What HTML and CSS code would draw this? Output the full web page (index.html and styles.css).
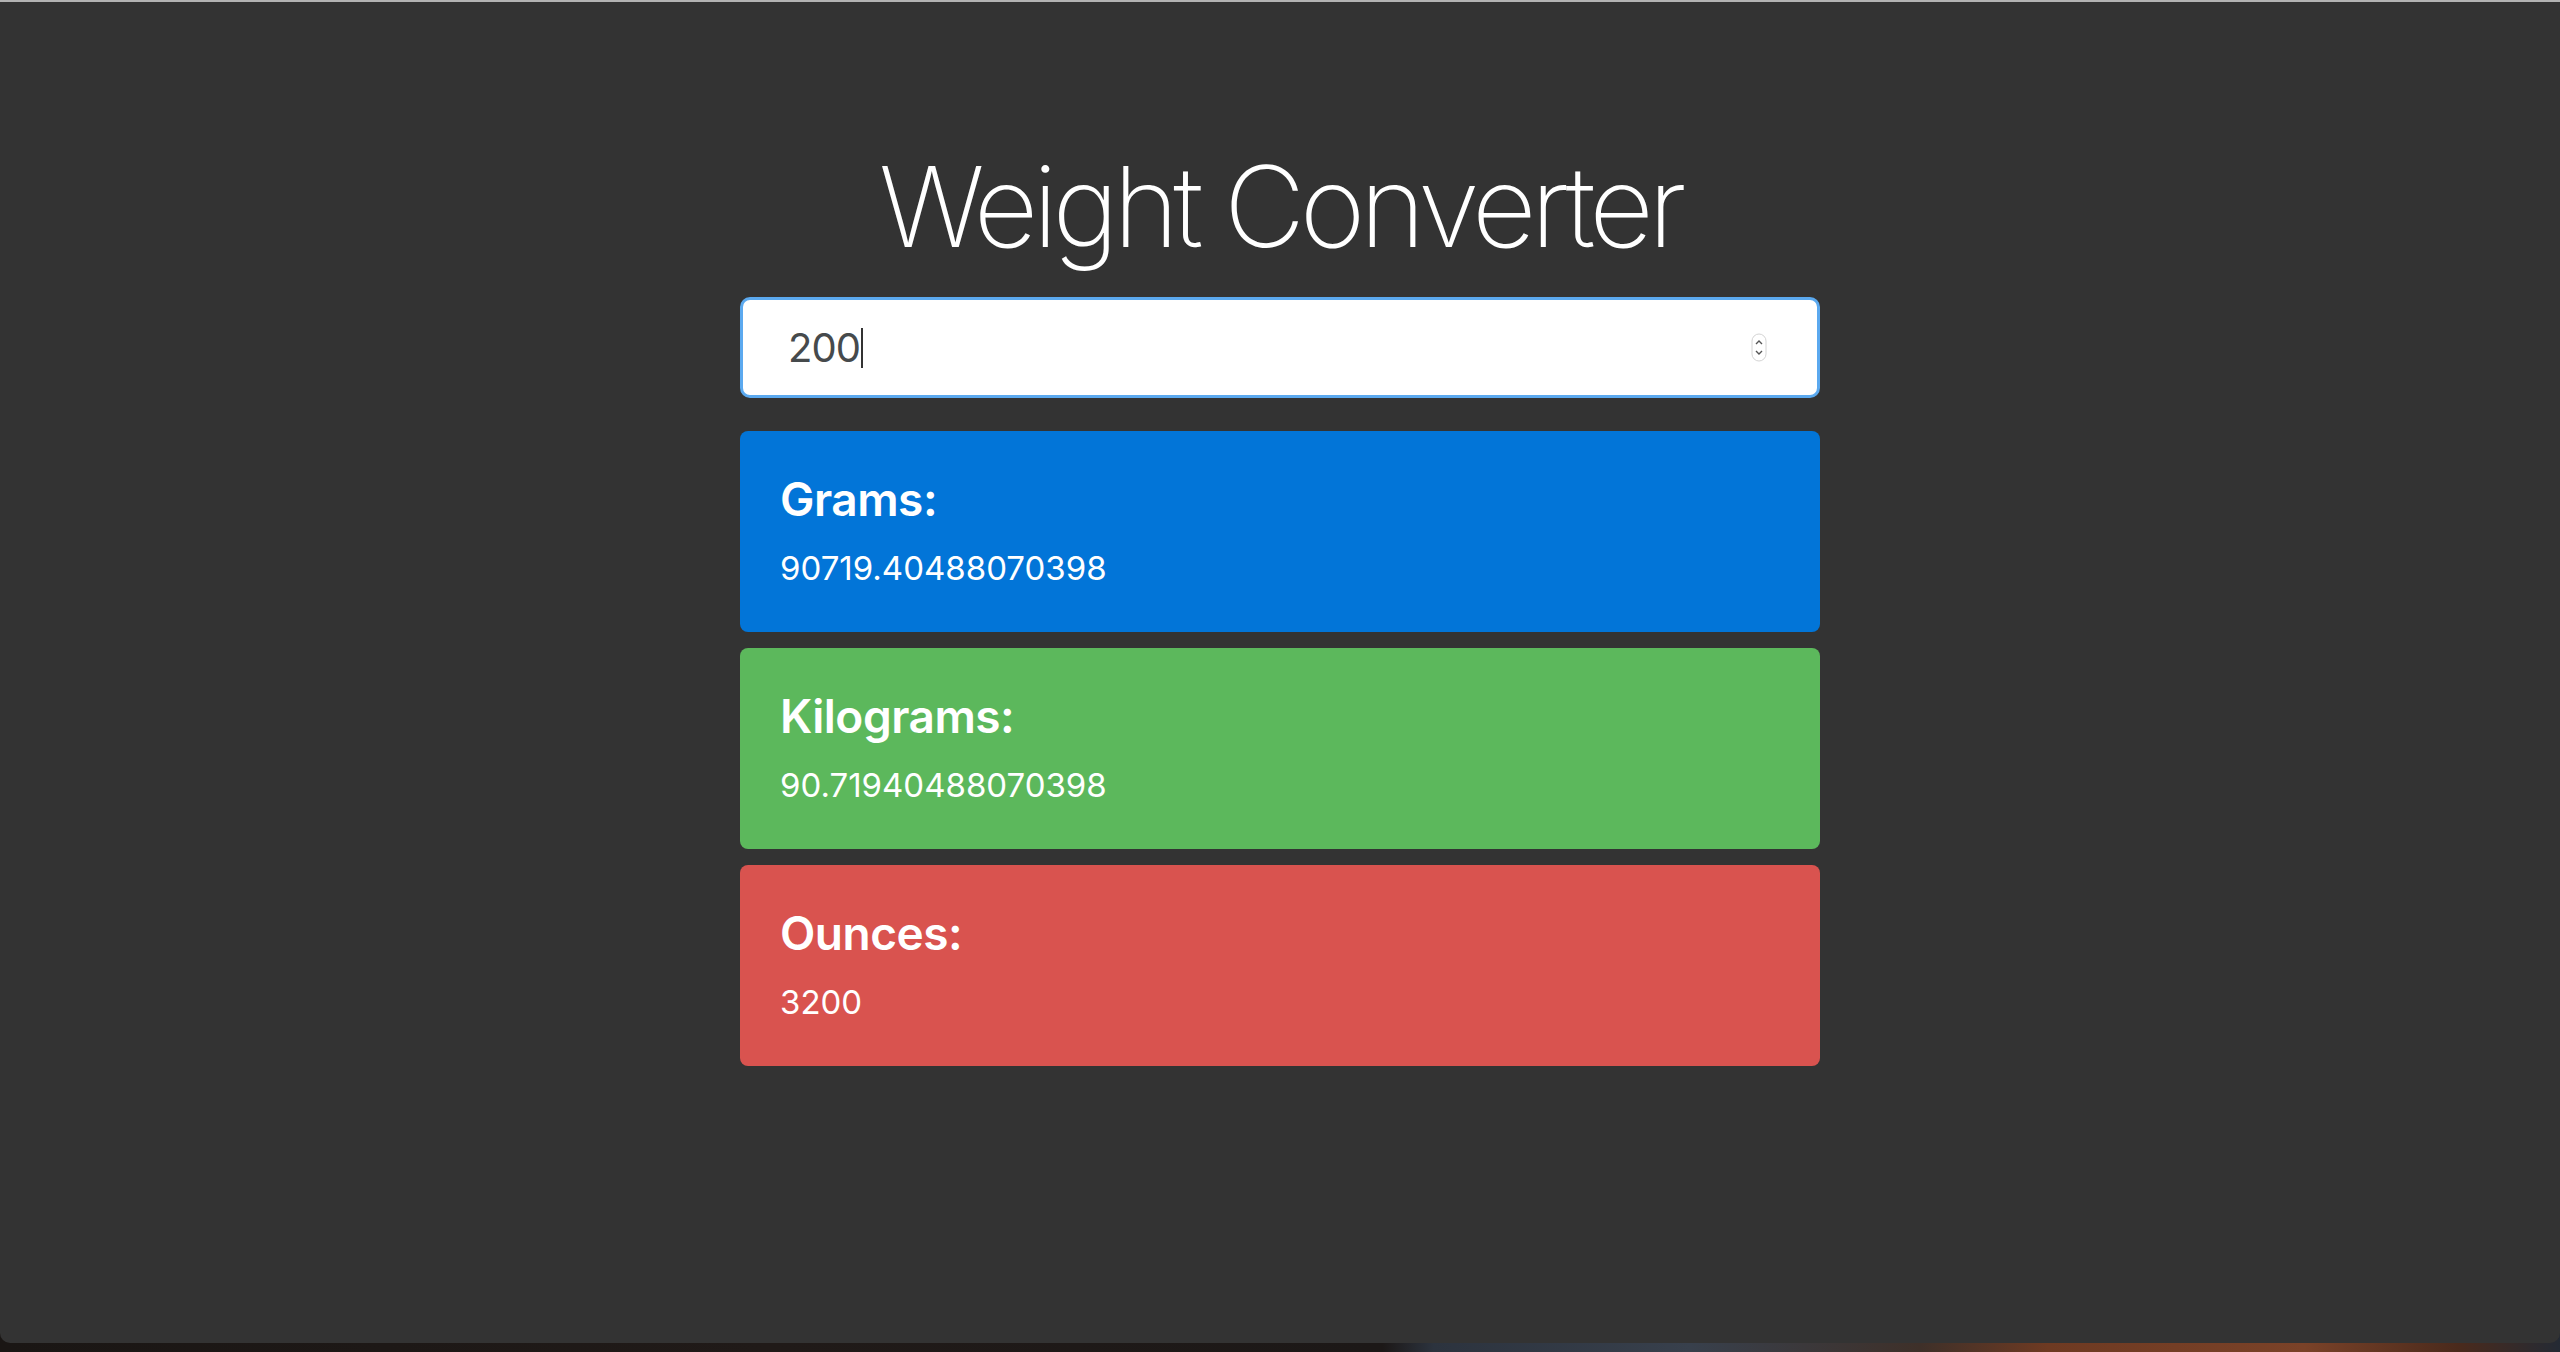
FILE: index.html
```html
<!DOCTYPE html>
<html lang="en">
<head>
<meta charset="utf-8">
<title>Weight Converter</title>
<link rel="stylesheet" href="styles.css">
</head>
<body>
<div class="window">
  <div class="container">
    <h1 class="title">Weight Converter</h1>
    <div class="field">
      <span class="field-value">200</span><span class="caret"></span>
      <svg class="spinner" width="16" height="29" viewBox="0 0 16 29" aria-hidden="true">
        <rect x="1" y="1" width="14" height="27" rx="7" ry="7" fill="#fff" stroke="#d4d4d4" stroke-width="1"/>
        <path d="M5 11 L8 8 L11 11" fill="none" stroke="#555" stroke-width="1.4"/>
        <path d="M5 18 L8 21 L11 18" fill="none" stroke="#555" stroke-width="1.4"/>
      </svg>
    </div>
    <div class="card card-blue">
      <h4 class="card-title">Grams:</h4>
      <p class="card-value">90719.40488070398</p>
    </div>
    <div class="card card-green">
      <h4 class="card-title">Kilograms:</h4>
      <p class="card-value">90.71940488070398</p>
    </div>
    <div class="card card-red">
      <h4 class="card-title">Ounces:</h4>
      <p class="card-value">3200</p>
    </div>
  </div>
</div>
</body>
</html>
```

FILE: styles.css
```css
html, body {
  margin: 0;
  padding: 0;
}

body {
  width: 2560px;
  height: 1352px;
  overflow: hidden;
  background: linear-gradient(90deg, #1a1614 0%, #201a18 30%, #1c1817 54%, #2c333e 56%, #38404c 66%, #3e3029 75%, #6e3a22 80%, #7a4228 90%, #4a2a1c 96%, #242a34 100%);
  font-family: Inter, "Noto Sans", "Liberation Sans", sans-serif;
}

.window {
  box-sizing: border-box;
  height: 1343px;
  background: #333333;
  border-top: 2px solid #b3b3b3;
  border-radius: 0 0 10px 10px;
}

.container {
  width: 1080px;
  margin: 0 auto;
  padding-top: 137px;
}

.title {
  margin: 0 0 24px;
  font-size: 112px;
  line-height: 1.2;
  font-weight: 200;
  color: #ffffff;
  text-align: center;
  letter-spacing: -5.5px;
}

.field {
  box-sizing: border-box;
  height: 101px;
  display: flex;
  align-items: center;
  padding: 0 50px 0 45px;
  background: #ffffff;
  border: 3px solid #5ba9ef;
  border-radius: 10px;
  margin-bottom: 33px;
}

.field-value {
  font-size: 40px;
  color: #464a4c;
  line-height: 1;
  letter-spacing: -1px;
}

.caret {
  width: 2px;
  height: 40px;
  background: #333;
  margin-left: 1px;
}

.spinner {
  margin-left: auto;
}

.card {
  box-sizing: border-box;
  height: 201px;
  padding: 40px;
  border-radius: 8px;
  margin-bottom: 16px;
  color: #ffffff;
}

.card-blue { background: #0275d8; }
.card-green { background: #5cb85c; }
.card-red { background: #d9534f; }

.card-title {
  margin: 0 0 15px;
  font-size: 46px;
  font-weight: 560;
  line-height: 1.25;
  letter-spacing: -0.5px;
}

.card-value {
  margin: 0;
  font-size: 33px;
  font-weight: 400;
  line-height: 48px;
}
```
